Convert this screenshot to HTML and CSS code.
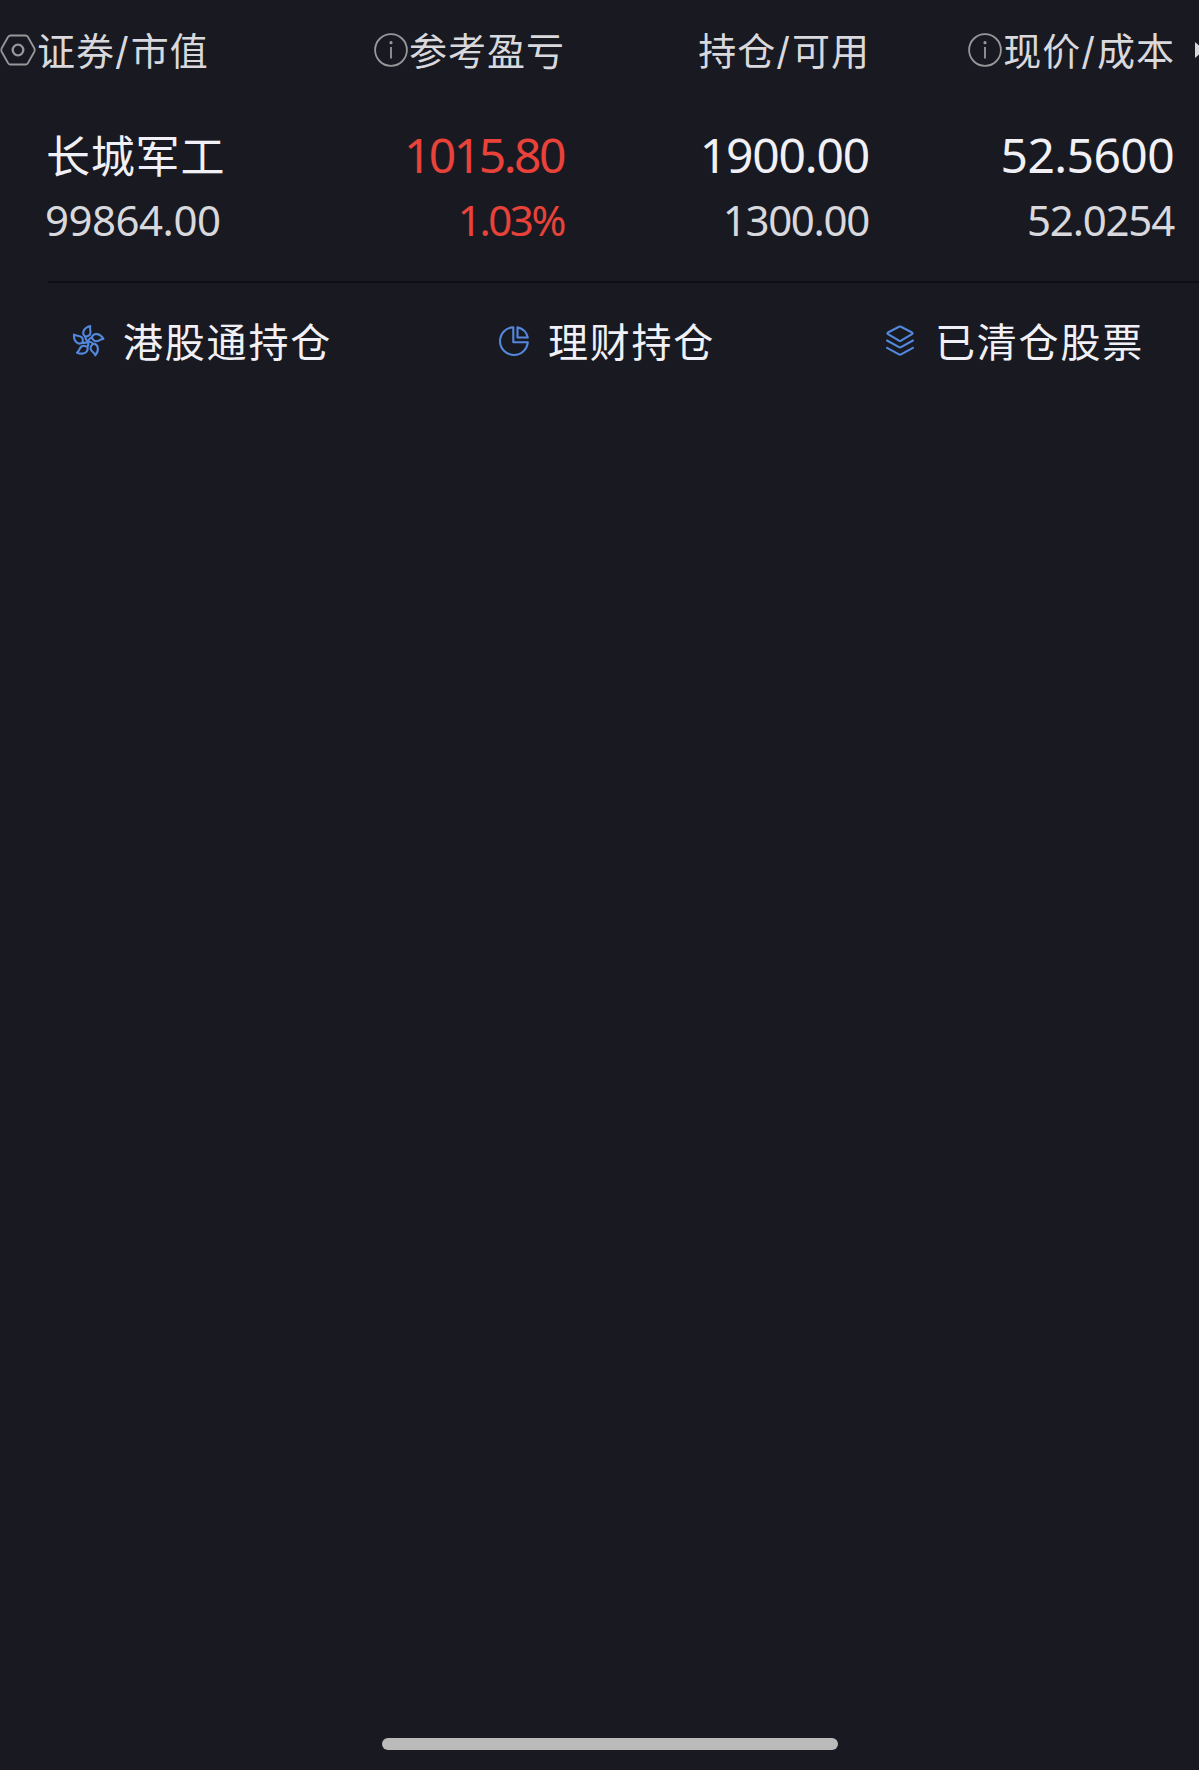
FILE: index.html
```html
<!DOCTYPE html>
<html lang="zh-CN">
<head>
<meta charset="utf-8">
<title>持仓</title>
<link rel="stylesheet" href="styles.css">
</head>
<body>
<main class="screen">
  <header class="row head">
    <div class="cell first">
      <svg class="ic-eye" width="36" height="36" viewBox="0 0 36 36"><path d="M10.5 3.500h15q1.500 0 2.300 1.300l6.400 11.200q1 2 0 4l-6.400 11.200q-.8 1.300-2.300 1.300h-15q-1.500 0-2.300-1.300L1.800 20q-1-2 0-4L8.200 4.800q.8-1.300 2.300-1.300z"/><circle class="bold" cx="18" cy="18" r="5.300"/></svg>
      <span>证券<i>/</i>市值</span>
    </div>
    <div class="cell">
      <svg class="ic-info" width="34" height="34" viewBox="0 0 34 34"><circle cx="17" cy="17" r="15.900"/><path d="M17 14v11.500"/><circle class="dot" cx="17" cy="9.700" r="1.600"/></svg>
      <span>参考盈亏</span>
    </div>
    <div class="cell"><span>持仓<i>/</i>可用</span></div>
    <div class="cell">
      <svg class="ic-info" width="34" height="34" viewBox="0 0 34 34"><circle cx="17" cy="17" r="15.900"/><path d="M17 14v11.500"/><circle class="dot" cx="17" cy="9.700" r="1.600"/></svg>
      <span>现价<i>/</i>成本</span>
    </div>
    <svg class="ic-more" width="4" height="18" viewBox="0 0 4 18"><path d="M0 1v16l9-8z"/></svg>
  </header>

  <section class="holding">
    <div class="row main-line">
      <div class="cell first name">长城军工</div>
      <div class="cell up profit">1015.80</div>
      <div class="cell amount">1900.00</div>
      <div class="cell price">52.5600</div>
    </div>
    <div class="row sub-line">
      <div class="cell first">99864.00</div>
      <div class="cell up rate">1.03%</div>
      <div class="cell amount">1300.00</div>
      <div class="cell price">52.0254</div>
    </div>
  </section>

  <nav class="links">
    <a class="link">
      <svg width="34" height="34" viewBox="0 0 34 34">
        <defs><path id="petal" d="M14.200 12.800C10 9 13 3.500 19.300 2C18 5 20.800 7 19 10.500C17.800 12.800 15.500 12 14.200 12.800Q14.500 15.500 17 17.500"/></defs>
        <use href="#petal"/><use href="#petal" transform="rotate(72 17 17.500)"/><use href="#petal" transform="rotate(144 17 17.500)"/><use href="#petal" transform="rotate(216 17 17.500)"/><use href="#petal" transform="rotate(288 17 17.500)"/>
      </svg>
      <span>港股通持仓</span>
    </a>
    <a class="link">
      <svg width="34" height="34" viewBox="0 0 34 34"><path d="M16.300 3.200A13.900 13.900 0 1 0 30.800 18.200H16.300z"/><path d="M20.500 3.200V13.500H30.800Q29.300 5.500 20.500 3.200z"/></svg>
      <span>理财持仓</span>
    </a>
    <a class="link">
      <svg width="34" height="34" viewBox="0 0 34 34"><path d="M16 2.800q1-.5 2 0l11 5.700q1.200.8 0 1.600l-11 6.600q-1 .5-2 0l-11-6.600q-1.200-.8 0-1.600z"/><path d="M4 16.500l12 6.600q1 .5 2 0l12-6.600"/><path d="M4 23.800l12 6.600q1 .5 2 0l12-6.600"/></svg>
      <span>已清仓股票</span>
    </a>
  </nav>

  <div class="home-bar"></div>
</main>
</body>
</html>
```
FILE: styles.css
```css
* { box-sizing: border-box; }

body {
  margin: 0;
  background: #191a21;
  color: #f1f0f6;
  font-family: Inter, "Noto Sans CJK SC", sans-serif;
}

.screen {
  width: 1199px;
  height: 1770px;
  overflow: hidden;
  display: flex;
  flex-direction: column;
}

.row {
  display: grid;
  grid-template-columns: 260px 304px 305px 305px 25px;
  align-items: center;
  white-space: nowrap;
}

.cell {
  display: flex;
  align-items: center;
  justify-content: flex-end;
}

.first { justify-content: flex-start; }

.head {
  height: 100px;
  font-size: 38px;
  line-height: 56px;
  letter-spacing: 1px;
  color: #d8d8dd;
}
.head span { margin-right: -1px; padding-top: 1px; }
.head i { font-style: normal; letter-spacing: 2px; }

.ic-eye, .ic-info {
  flex: none;
  fill: none;
  stroke: #98979a;
  stroke-width: 1.8;
}
.ic-eye { margin-right: 1px; }
.ic-eye .bold { stroke-width: 2.3; }
.ic-info { margin-right: 1px; }
.ic-info .dot { fill: #98979a; stroke: none; }
.ic-more { justify-self: end; fill: #d8d8dd; }

.holding {
  height: 183px;
  margin-left: 48px;
  border-bottom: 2px solid #0f0f13;
  font-family: "Noto Sans", "Noto Sans CJK SC", sans-serif;
}
.holding .row { margin-left: -48px; }
.holding .first { padding-left: 45px; }

.main-line {
  height: 66px;
  margin-top: 22px;
  font-size: 48px;
  line-height: 66px;
}
.main-line .name {
  font-family: "Noto Sans CJK SC", sans-serif;
  font-size: 44px;
  line-height: 62px;
  letter-spacing: .8px;
  padding-left: 46px;
  padding-bottom: 2px;
}
.main-line .profit { letter-spacing: -2.5px; }
.main-line .amount { letter-spacing: -1.2px; }
.main-line .price { letter-spacing: -.6px; }

.sub-line {
  height: 66px;
  margin-top: -1px;
  font-size: 42px;
  line-height: 66px;
  color: #d8d8dd;
}
.sub-line .first { letter-spacing: -.5px; }
.sub-line .rate { letter-spacing: -2.4px; }
.sub-line .amount { letter-spacing: -1.3px; }
.sub-line .price { letter-spacing: -1.2px; }

.up, .sub-line .up { color: #e8423a; }

.links {
  height: 118px;
  padding: 0 55px 0 71px;
  display: flex;
  align-items: center;
  justify-content: space-between;
}
.link {
  display: flex;
  align-items: center;
  gap: 18px;
  font-size: 40px;
  line-height: 58px;
  letter-spacing: 1.8px;
}
.link:nth-child(2) { margin-right: 3px; gap: 17px; }
.link span { padding-top: 1px; }
.link svg {
  flex: none;
  margin-bottom: 2px;
  fill: none;
  stroke: #5388dd;
  stroke-width: 2.1;
  stroke-linejoin: round;
  stroke-linecap: round;
}

.home-bar {
  width: 456px;
  height: 12px;
  margin: auto auto 20px 382px;
  border-radius: 6px;
  background: #bababb;
}
```
